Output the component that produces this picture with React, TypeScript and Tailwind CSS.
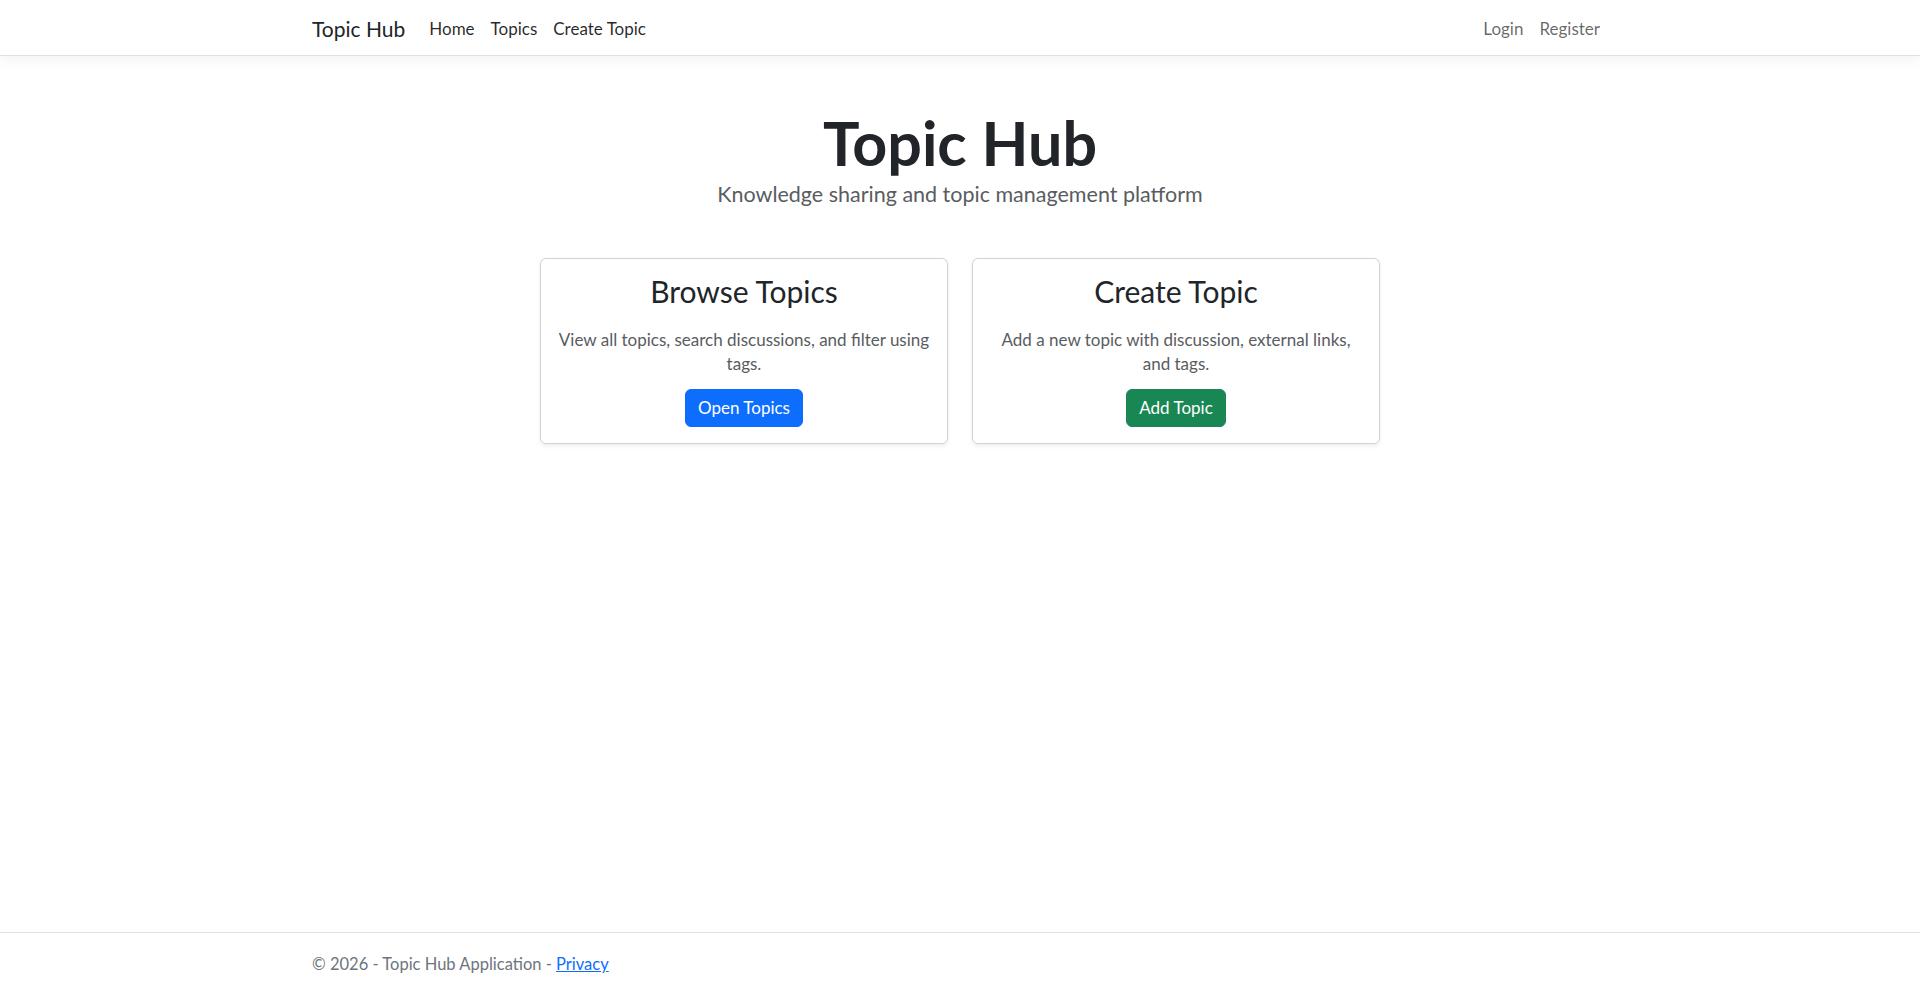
import React from 'react'

const font = { fontFamily: 'Lato, "Liberation Sans", sans-serif' }

const cards = [
  {
    title: 'Browse Topics',
    text: 'View all topics, search discussions, and filter using tags.',
    button: 'Open Topics',
    color: 'bg-[#0d6efd] border-[#0d6efd]',
  },
  {
    title: 'Create Topic',
    text: 'Add a new topic with discussion, external links, and tags.',
    button: 'Add Topic',
    color: 'bg-[#198754] border-[#198754]',
  },
]

export default function App() {
  return (
    <div className="min-h-screen flex flex-col bg-white text-[#212529]" style={font}>
      {/* Navbar */}
      <nav className="h-14 bg-white border-b border-[#dee2e6] shadow-[0_4px_12px_rgba(0,0,0,0.05)]">
        <div className="w-[1320px] mx-auto px-3 pt-[2px] h-full flex items-center">
          <span className="text-[21px] mr-4 text-[#212529]">Topic Hub</span>
          <ul className="flex items-center text-[17px]">
            <li className="px-2 text-[rgba(0,0,0,0.85)]">Home</li>
            <li className="px-2 text-[rgba(0,0,0,0.85)]">Topics</li>
            <li className="px-2 text-[rgba(0,0,0,0.85)]">Create Topic</li>
          </ul>
          <ul className="ml-auto flex items-center text-[17px]">
            <li className="px-2 text-[rgba(0,0,0,0.6)]">Login</li>
            <li className="px-2 text-[rgba(0,0,0,0.6)]">Register</li>
          </ul>
        </div>
      </nav>

      {/* Main */}
      <main className="w-[1320px] mx-auto px-3 pt-[50px]">
        <div className="text-center">
          <h1 className="text-[61px] leading-[1.2] font-bold">Topic Hub</h1>
          <p className="text-[21.5px] leading-[30px] text-[#595c5f]">
            Knowledge sharing and topic management platform
          </p>
        </div>

        <div className="flex justify-center gap-6 mt-[49px]">
          {cards.map((c) => (
            <div
              key={c.title}
              className="w-[408px] border border-[rgba(0,0,0,0.175)] rounded-md shadow-[0_2px_4px_rgba(0,0,0,0.075)] p-4 text-center"
            >
              <h3 className="text-[30px] leading-[1.1] mb-[20px]">{c.title}</h3>
              <p className="text-[17px] leading-6 text-[#595c5f] mb-[13px]">{c.text}</p>
              <button
                className={`${c.color} border text-white text-[17px] leading-6 px-3 py-1.5 rounded-md`}
              >
                {c.button}
              </button>
            </div>
          ))}
        </div>
      </main>

      {/* Footer */}
      <footer className="mt-auto h-[61px] border-t border-[#dee2e6] text-[#6c757d]">
        <div className="w-[1320px] mx-auto px-3 pt-[2px] leading-[58px] text-[16.5px]">
          © 2026 - Topic Hub Application -{' '}
          <a className="text-[#0d6efd] underline" href="#">
            Privacy
          </a>
        </div>
      </footer>
    </div>
  )
}
